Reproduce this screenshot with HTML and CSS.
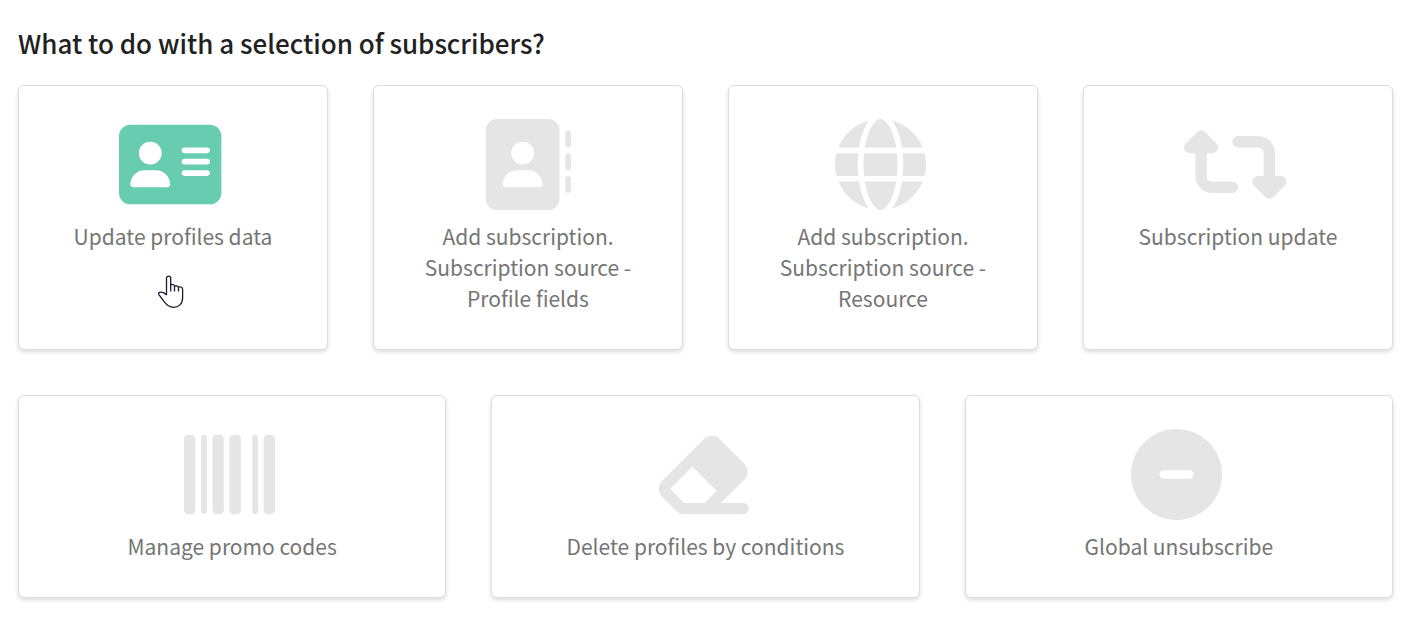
FILE: index.html
```html
<!DOCTYPE html>
<html lang="en">
<head>
    <meta charset="UTF-8" />
    <meta name="viewport" content="width=device-width, initial-scale=1.0" />
    <title>Subscribers selection</title>
    <link rel="stylesheet" href="styles.css">
</head>
<body>
    <main class="container">
        <h2>What to do with a selection of subscribers?</h2>
        <div class="row four">
            <a href="#" class="card active">
                <svg class="icon" viewBox="0 0 576 512" aria-hidden="true"><path d="M64 32C28.7 32 0 60.7 0 96V416c0 35.3 28.7 64 64 64H512c35.3 0 64-28.7 64-64V96c0-35.3-28.7-64-64-64H64zm80 256h64c44.2 0 80 35.8 80 80c0 8.8-7.2 16-16 16H80c-8.8 0-16-7.2-16-16c0-44.2 35.8-80 80-80zm-32-96a64 64 0 1 1 128 0 64 64 0 1 1 -128 0zm256-32H496c8.8 0 16 7.2 16 16s-7.2 16-16 16H368c-8.8 0-16-7.2-16-16s7.2-16 16-16zm0 64H496c8.8 0 16 7.2 16 16s-7.2 16-16 16H368c-8.8 0-16-7.2-16-16s7.2-16 16-16zm0 64H496c8.8 0 16 7.2 16 16s-7.2 16-16 16H368c-8.8 0-16-7.2-16-16s7.2-16 16-16z"/></svg>
                <span class="label">Update profiles data</span>
                <svg class="pointer" viewBox="0 0 26 33" aria-hidden="true"><path d="M8.5 20V3.2a2.1 2.1 0 0 1 4.2 0V16.5M12.7 9.6Q16.3 9 16.5 11.5V16.5M16.5 11Q20.4 10.2 20.5 12.8V16.5M20.5 12.2Q24.6 11.2 24.6 14.5V23C24.6 29 20.5 32.3 15.5 32.3C11.5 32.3 9 30.3 6.5 27.2L.9 19.6C-.1 18 1.2 17 3 17.1C5.2 17.2 7 18.3 8.5 20"/></svg>
            </a>
            <a href="#" class="card">
                <svg class="icon" viewBox="0 0 512 512" aria-hidden="true"><path d="M96 0C60.7 0 32 28.7 32 64V448c0 35.3 28.7 64 64 64H384c35.3 0 64-28.7 64-64V64c0-35.3-28.7-64-64-64H96zM208 288h64c44.2 0 80 35.8 80 80c0 8.8-7.2 16-16 16H144c-8.8 0-16-7.2-16-16c0-44.2 35.8-80 80-80zm-32-96a64 64 0 1 1 128 0 64 64 0 1 1 -128 0zM512 80c0-8.8-7.2-16-16-16s-16 7.2-16 16v64c0 8.8 7.2 16 16 16s16-7.2 16-16V80zM496 192c-8.8 0-16 7.2-16 16v64c0 8.8 7.2 16 16 16s16-7.2 16-16V208c0-8.8-7.2-16-16-16zm16 144c0-8.8-7.2-16-16-16s-16 7.2-16 16v64c0 8.8 7.2 16 16 16s16-7.2 16-16V336z"/></svg>
                <span class="label">Add subscription. Subscription source - Profile fields</span>
            </a>
            <a href="#" class="card">
                <svg class="icon" viewBox="0 0 512 512" aria-hidden="true"><path d="M352 256c0 22.2-1.2 43.6-3.3 64H163.3c-2.2-20.4-3.3-41.8-3.3-64s1.2-43.6 3.3-64H348.7c2.2 20.4 3.3 41.8 3.3 64zm28.8-64H503.9c5.3 20.5 8.1 41.9 8.1 64s-2.8 43.5-8.1 64H380.8c2.1-20.6 3.2-42 3.2-64s-1.1-43.4-3.2-64zm112.6-32H376.7c-10-63.9-29.8-117.4-55.3-151.6c78.3 20.7 142 77.5 171.9 151.6zm-149.1 0H167.7c6.1-36.4 15.5-68.6 27-94.7c10.5-23.6 22.2-40.7 33.5-51.5C239.4 3.2 248.7 0 256 0s16.6 3.2 27.8 13.8c11.3 10.8 23 27.9 33.5 51.5c11.6 26 20.9 58.2 27 94.7zm-209 0H18.6C48.6 85.9 112.2 29.1 190.6 8.4C165.1 42.6 145.3 96.1 135.3 160zM8.1 192H131.2c-2.1 20.6-3.2 42-3.2 64s1.1 43.4 3.2 64H8.1C2.8 299.5 0 278.1 0 256s2.8-43.5 8.1-64zM194.7 446.6c-11.6-26-20.9-58.2-27-94.6H344.3c-6.1 36.4-15.5 68.6-27 94.6c-10.5 23.6-22.2 40.7-33.5 51.5C272.6 508.8 263.3 512 256 512s-16.6-3.2-27.8-13.8c-11.3-10.8-23-27.9-33.5-51.5zM135.3 352c10 63.9 29.8 117.4 55.3 151.6C112.2 482.9 48.6 426.1 18.6 352H135.3zm358.1 0c-30 74.1-93.6 130.9-171.9 151.6c25.5-34.2 45.2-87.7 55.3-151.6H493.4z"/></svg>
                <span class="label">Add subscription. Subscription source - Resource</span>
            </a>
            <a href="#" class="card">
                <svg class="icon" viewBox="0 0 576 512" aria-hidden="true"><path d="M272 416c17.7 0 32-14.3 32-32s-14.3-32-32-32H160c-17.7 0-32-14.3-32-32V192h32c12.9 0 24.6-7.8 29.6-19.8s2.2-25.7-6.9-34.9l-64-64c-12.5-12.5-32.8-12.5-45.3 0l-64 64c-9.2 9.2-11.9 22.9-6.9 34.9s16.6 19.8 29.6 19.8l32 0 0 128c0 53 43 96 96 96H272zM304 96c-17.7 0-32 14.3-32 32s14.3 32 32 32l112 0c17.7 0 32 14.3 32 32l0 128H416c-12.9 0-24.6 7.8-29.6 19.8s-2.2 25.7 6.9 34.9l64 64c12.5 12.5 32.8 12.5 45.3 0l64-64c9.2-9.2 11.9-22.9 6.9-34.9s-16.6-19.8-29.6-19.8l-32 0V192c0-53-43-96-96-96L304 96z"/></svg>
                <span class="label">Subscription update</span>
            </a>
        </div>
        <div class="row three">
            <a href="#" class="card">
                <svg class="icon" viewBox="0 0 512 512" aria-hidden="true"><path d="M24 32C10.7 32 0 42.7 0 56V456c0 13.3 10.7 24 24 24H40c13.3 0 24-10.7 24-24V56c0-13.3-10.7-24-24-24H24zm88 0c-8.8 0-16 7.2-16 16V464c0 8.8 7.2 16 16 16s16-7.2 16-16V48c0-8.8-7.2-16-16-16zm72 0c-13.3 0-24 10.7-24 24V456c0 13.3 10.7 24 24 24h16c13.3 0 24-10.7 24-24V56c0-13.3-10.7-24-24-24H184zm96 0c-13.3 0-24 10.7-24 24V456c0 13.3 10.7 24 24 24h16c13.3 0 24-10.7 24-24V56c0-13.3-10.7-24-24-24H280zM448 56V456c0 13.3 10.7 24 24 24h16c13.3 0 24-10.7 24-24V56c0-13.3-10.7-24-24-24H472c-13.3 0-24 10.7-24 24zm-64-8V464c0 8.8 7.2 16 16 16s16-7.2 16-16V48c0-8.8-7.2-16-16-16s-16 7.2-16 16z"/></svg>
                <span class="label">Manage promo codes</span>
            </a>
            <a href="#" class="card">
                <svg class="icon" viewBox="0 0 576 512" aria-hidden="true"><path d="M290.7 57.4L57.4 290.7c-25 25-25 65.5 0 90.5l80 80c12 12 28.3 18.7 45.3 18.7H288h9.4H512c17.7 0 32-14.3 32-32s-14.3-32-32-32H387.9L518.6 285.3c25-25 25-65.5 0-90.5L381.3 57.4c-25-25-65.5-25-90.5 0zM297.4 416H288l-105.4 0-80-80L227.3 211.3 364.7 348.7 297.4 416z"/></svg>
                <span class="label">Delete profiles by conditions</span>
            </a>
            <a href="#" class="card">
                <svg class="icon" viewBox="0 0 512 512" aria-hidden="true"><path d="M256 512A256 256 0 1 0 256 0a256 256 0 1 0 0 512zM184 232H328c13.3 0 24 10.7 24 24s-10.7 24-24 24H184c-13.3 0-24-10.7-24-24s10.7-24 24-24z"/></svg>
                <span class="label">Global unsubscribe</span>
            </a>
        </div>
    </main>
</body>
</html>
```
FILE: styles.css
```css
body {
    font-family: "Source Sans Pro", "Noto Sans CJK SC", sans-serif;
    background: #ffffff;
    margin: 0;
}
.container {
    padding: 23px 19px 23px 18px;
}
h2 {
    margin: 0 0 22px;
    font-size: 26px;
    font-weight: 500;
    line-height: 40px;
    color: #212121;
}
.row {
    display: grid;
    gap: 45px;
    margin-bottom: 45px;
}
.row:last-child {
    margin-bottom: 0;
}
.four {
    grid-template-columns: repeat(4, 1fr);
}
.three {
    grid-template-columns: repeat(3, 1fr);
}
.card {
    position: relative;
    display: flex;
    flex-direction: column;
    align-items: center;
    gap: 11px;
    padding: 33px 32px 35px;
    border: 1px solid #dddddd;
    border-radius: 6px;
    background: #ffffff;
    box-shadow: 0 2px 4px rgba(0, 0, 0, 0.14);
    color: #757575;
    text-align: center;
    text-decoration: none;
}
.icon {
    height: 91px;
    margin-right: 5px;
    fill: #e5e5e5;
}
.active .icon {
    fill: #68cdb0;
}
.label {
    font-size: 21px;
    line-height: 31px;
}
.pointer {
    position: absolute;
    top: 189px;
    left: 139px;
    width: 26px;
    height: 33px;
    overflow: visible;
    fill: #ffffff;
    stroke: #1c1a33;
    stroke-width: 1.3;
    stroke-linejoin: round;
}
```
